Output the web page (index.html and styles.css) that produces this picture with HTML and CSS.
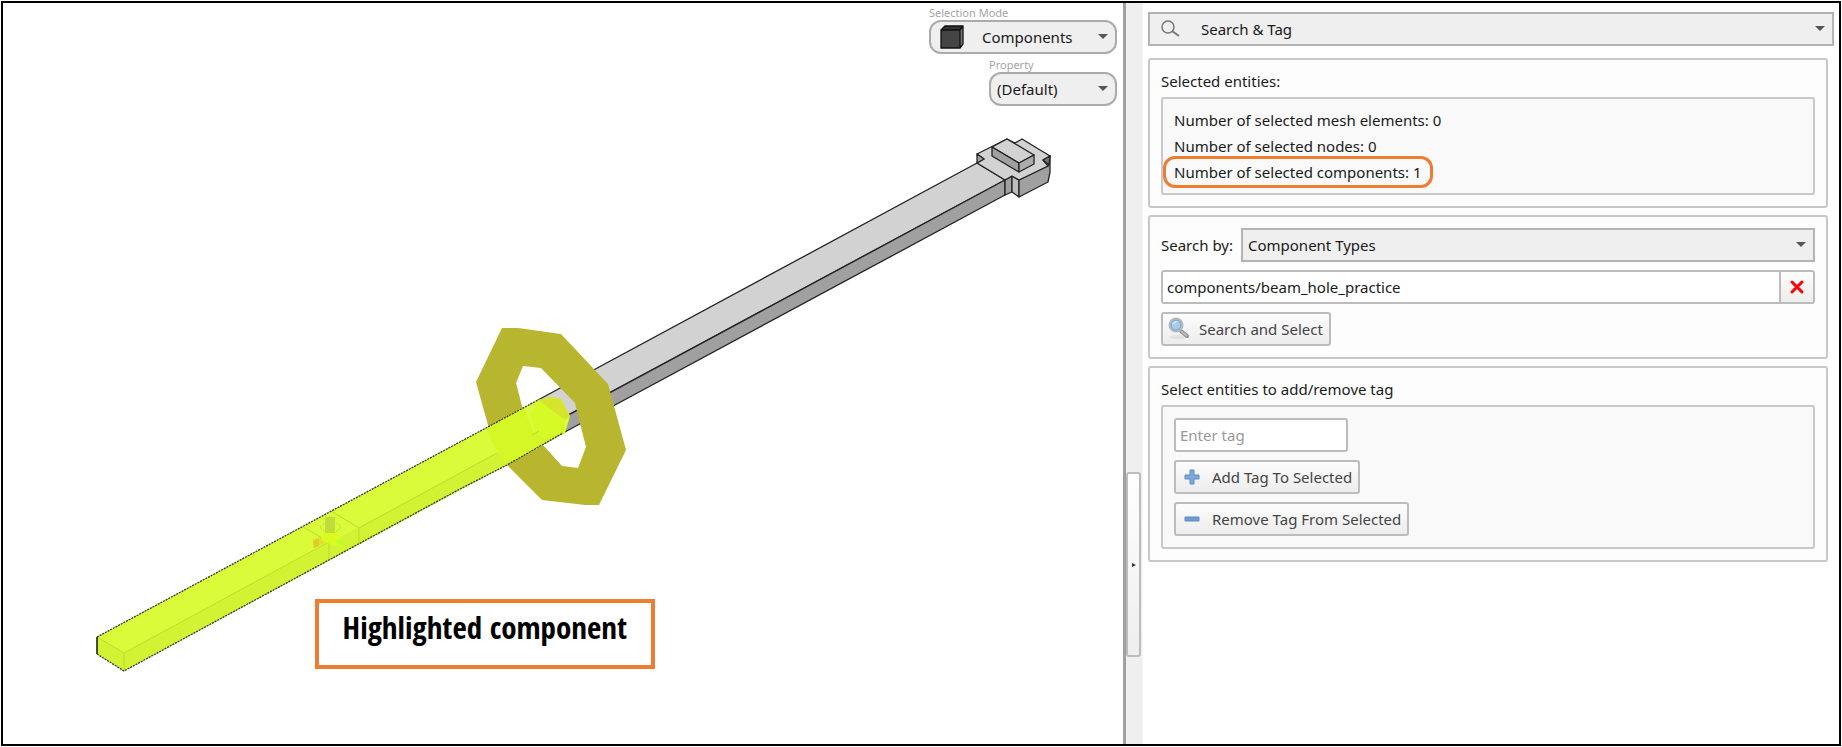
FILE: index.html
```html
<!DOCTYPE html>
<html lang="en">
<head>
    <meta charset="UTF-8">
    <meta name="viewport" content="width=device-width, initial-scale=1.0">
    <title>Search &amp; Tag</title>
    <link rel="stylesheet" href="styles.css">
</head>
<body>
    <div class="window">
        <main class="viewport">
            <svg class="scene" viewBox="3 3 1120 741" preserveAspectRatio="xMinYMin meet" aria-label="Beam model">
                <!-- grey beam -->
                <g stroke="#222" stroke-width="1.3" stroke-linejoin="round">
                    <polygon points="538,400 977,163 1005,180 568,415 550,425" fill="#d2d2d2"/>
                    <polygon points="1005,180 1005,195 563,433 563,418" fill="#a0a0a0"/>
                    <polygon points="1005,180 1012,176 1012,192 1005,195" fill="#a0a0a0"/>
                    <polygon points="1012,176 1019,180 1019,197 1012,192" fill="#bdbdbd"/>
                    <polygon points="1019,180 1048,166 1050,156 1050,172 1048,182 1019,197" fill="#a0a0a0"/>
                    <polygon points="977,154 1007,139 1015,143 1022,139 1050,156 1043,160 1048,166 1019,180 1012,176 1005,180 977,163 984,159" fill="#d2d2d2"/>
                    <polygon points="977,154 984,159 977,163" fill="#a0a0a0"/>
                    <polygon points="1050,156 1043,160 1049,165" fill="#777"/>
                    <polygon points="992,147 1007,139 1034,155 1019,163" fill="#d2d2d2"/>
                    <polygon points="992,147 1019,163 1019,172 992,156" fill="#a0a0a0"/>
                    <polygon points="1034,155 1034,164 1019,172 1019,163" fill="#acacac"/>
                </g>
                <!-- ring -->
                <path fill="#b7b62e" fill-rule="evenodd" d="M502 328H518L561 334L608 384L626 450L599 505H585L542 500L507 465L493 443L476 382ZM523 366L541 368L575 403L586 447L578 468L562 466L543 445L523 410L516 383Z"/>
                <!-- highlighted beam -->
                <polygon points="97,637 538,400 551,397 561,399 570,416 565,433 124,653" fill="#d9fb3a"/>
                <polygon points="124,653 497,453 543,429 565,433 507,465 124,671" fill="#d2f334"/>
                <polygon points="97,637 124,653 124,671 97,654" fill="#d2f334"/>
                <polygon points="486,428 523,407 533,431 543,445 507,465 494,445" fill="#d5f726"/>
                <polygon points="538,400 551,397 561,399 570,416 565,420" fill="#d5e52b"/>
                <polygon points="531,415 538,401 565,420 564,433 543,439 535,431" fill="#d5fa26"/>
                <g fill="none" stroke="#bddb2b" stroke-width="1">
                    <path d="M97 637L124 653V671M124 653L329 542M359 528L497 453M303 527L329 542V560M331 511L359 528V544M532 435L539 431"/>
                    <path d="M320 527L326 522H335L341 527L335 533H326Z" stroke-dasharray="2 1"/>
                </g>
                <g>
                    <rect x="325" y="517" width="10" height="16" fill="#bfdc3a"/>
                    <path d="M313 539L328 536L329 541L314 548Z" fill="#dde02c"/>
                    <path d="M313 541L319 539V546L314 548Z" fill="#dfcb2b"/>
                    <path d="M324 533H337L342 538L336 541L345 547L330 544L321 540Z" fill="#d9fc1f"/>
                    <path d="M336 541L343 539L345 547Z" fill="#bbfa2c"/>
                </g>
                <path d="M97 637L538 400M97 654L124 671L460 489L507 465L563 433" fill="none" stroke="#333" stroke-width="1.3" stroke-dasharray="2 1"/>
                <path d="M97 637V654" stroke="#111" stroke-width="1.5"/>
            </svg>

            <div class="view-controls">
                <label for="selectionMode">Selection Mode</label>
                <div class="dropdown pill pill-wide">
                    <svg class="icon-cube" width="24" height="24" viewBox="0 0 24 24">
                        <path d="M1 5L5 1H23L20 5Z" fill="#333"/>
                        <path d="M20 5L23 1V19L20 23Z" fill="#777"/>
                        <path d="M1 5H20V23H1Z" fill="#444"/>
                        <path d="M1 5H20V23H1ZM1 5L5 1H23V19L20 23M20 5L23 1" fill="none" stroke="#111" stroke-width="1.3"/>
                    </svg>
                    <select id="selectionMode"><option>Components</option></select>
                </div>
                <label for="property">Property</label>
                <div class="dropdown pill">
                    <select id="property"><option>(Default)</option></select>
                </div>
            </div>

            <div class="annotation">Highlighted component</div>
        </main>

        <div class="splitter">
            <button class="handle" aria-label="Collapse panel"></button>
        </div>

        <aside class="panel">
            <div class="dropdown panel-title">
                <svg class="icon-search" width="20" height="18" viewBox="0 0 20 18" fill="none" stroke="#777">
                    <circle cx="7" cy="7" r="6" stroke-width="1.5"/>
                    <path d="M11 11L18 16" stroke-width="2"/>
                </svg>
                <select id="panelName" aria-label="Panel"><option>Search &amp; Tag</option></select>
            </div>

            <section class="group">
                <h2>Selected entities:</h2>
                <div class="inner counts">
                    <p>Number of selected mesh elements: 0</p>
                    <p>Number of selected nodes: 0</p>
                    <p class="marked">Number of selected components: 1</p>
                </div>
            </section>

            <section class="group search">
                <div class="row">
                    <label for="searchBy">Search by:</label>
                    <div class="dropdown">
                        <select id="searchBy"><option>Component Types</option></select>
                    </div>
                </div>
                <div class="field">
                    <input type="text" id="query" aria-label="Search text" value="components/beam_hole_practice">
                    <button class="clear" aria-label="Clear">
                        <svg width="16" height="16" viewBox="0 0 16 16"><path d="M3 3L13 13M13 3L3 13" stroke="#f00" stroke-width="3" stroke-linecap="round"/></svg>
                    </button>
                </div>
                <button class="btn btn-search">
                    <svg width="24" height="24" viewBox="0 0 24 24">
                        <ellipse cx="11" cy="20" rx="9" ry="2" fill="#e2e2e2"/>
                        <path d="M14 14L20 19" stroke="#8c8c8c" stroke-width="4" stroke-linecap="round"/>
                        <path d="M14 14L20 19" stroke="#bbb" stroke-width="2"/>
                        <circle cx="9" cy="8" r="6" fill="#a9cbee" stroke="#b5b9be" stroke-width="3"/>
                        <circle cx="9" cy="8" r="5" fill="none" stroke="#7ba7d8"/>
                        <path d="M5 8Q6 4 11 4Q8 6 5 8Z" fill="#e3f0fc"/>
                    </svg>
                    Search and Select
                </button>
            </section>

            <section class="group">
                <h2>Select entities to add/remove tag</h2>
                <div class="inner tags">
                    <input type="text" id="tag" aria-label="Tag" placeholder="Enter tag">
                    <button class="btn">
                        <svg width="16" height="16" viewBox="0 0 16 16"><path d="M6 1H10V6H15V10H10V15H6V10H1V6H6Z" fill="#7fa9dc" stroke="#5f8cc2"/></svg>
                        Add Tag To Selected
                    </button>
                    <button class="btn">
                        <svg width="16" height="16" viewBox="0 0 16 16"><path d="M1 6H15V10H1Z" fill="#6f9cd2" stroke="#5f8cc2"/></svg>
                        Remove Tag From Selected
                    </button>
                </div>
            </section>
        </aside>
    </div>
</body>
</html>
```

FILE: styles.css
```css
* {
    box-sizing: border-box;
}
body {
    margin: 0;
    padding: 1px;
    background: #fff;
    color: #1a1a1a;
    font-family: "Noto Sans", sans-serif;
    font-size: 15px;
}
.window {
    display: grid;
    grid-template-columns: minmax(0, 1120fr) 20px minmax(0, 696fr);
    min-height: calc(100vh - 2px);
    border: 2px solid #000;
}

/* 3D view */
.viewport {
    position: relative;
}
.scene {
    display: block;
    width: 100%;
}
.view-controls {
    position: absolute;
    top: 3px;
    right: 6px;
    display: flex;
    flex-direction: column;
}
.view-controls label {
    width: 128px;
    align-self: flex-end;
    font-size: 11px;
    line-height: 14px;
    color: #a4a4a4;
}
.view-controls label:first-child {
    width: 188px;
}
.annotation {
    position: absolute;
    left: 28%;
    bottom: 75px;
    margin-left: -2px;
    padding: 6px 24px 20px;
    border: 4px solid #ed7d31;
    background: #fff;
    color: #000;
    font-family: "Open Sans Condensed", "Open Sans", sans-serif;
    font-size: 31px;
    font-weight: bold;
    line-height: 36px;
    white-space: nowrap;
}

/* Controls */
select, input, button {
    height: 34px;
    margin: 0;
    font: inherit;
    color: inherit;
}
select {
    appearance: none;
    width: 100%;
    padding: 0 28px 0 5px;
    border: 2px solid #b4b4b4;
    border-radius: 0;
    background: #efefef;
}
input {
    padding: 0 4px;
    border: 2px solid #bcbcbc;
    border-radius: 3px;
    background: #fff;
}
input::placeholder {
    color: #999;
    opacity: 1;
}
.dropdown {
    position: relative;
    flex: 1;
}
.dropdown::after {
    content: "";
    position: absolute;
    top: 14px;
    right: 9px;
    border: 5px solid transparent;
    border-top-color: #555;
    border-bottom: 0;
}
.pill {
    flex: none;
    width: 128px;
    align-self: flex-end;
    margin-bottom: 4px;
}
.pill-wide {
    width: 188px;
}
.pill select {
    display: block;
    padding-left: 6px;
    border-color: #ababab;
    border-radius: 12px;
}
.pill-wide select {
    padding-left: 51px;
}
.icon-cube, .icon-search {
    position: absolute;
    top: 5px;
    left: 11px;
}
.icon-search {
    top: 8px;
    left: 13px;
}
.btn {
    display: flex;
    align-items: center;
    gap: 12px;
    padding: 0 6px 0 8px;
    border: 2px solid #bcbcbc;
    border-radius: 3px;
    background: linear-gradient(#fdfdfd, #ececec);
    color: #444;
    white-space: nowrap;
}
.btn-search {
    gap: 8px;
    padding-left: 4px;
}

/* Splitter */
.splitter {
    display: flex;
    align-items: flex-start;
    border-left: 3px solid #a0a0a0;
    border-right: 1px solid #f6f6f6;
    background: #efefef;
}
.handle {
    width: 15px;
    height: 185px;
    margin-top: 469px;
    padding: 0;
    border: 2px solid #bcbcbc;
    border-radius: 3px;
    background: linear-gradient(#fff, #eee);
}
.handle::after {
    content: "";
    display: block;
    width: 0;
    margin-left: 4px;
    border: 2px solid transparent;
    border-left: 4px solid #333;
    border-right: 0;
}

/* Side panel */
.panel {
    display: flex;
    flex-direction: column;
    gap: 7px;
    padding: 9px 11px 9px 5px;
}
.panel-title {
    flex: none;
    margin: 0 -6px 5px 0;
}
.panel-title select {
    display: block;
    padding-left: 51px;
}
.group {
    padding: 11px;
    border: 2px solid #c8c8c8;
    border-radius: 3px;
    background: #fdfdfd;
}
h2 {
    margin: 0 0 6px;
    font-size: inherit;
    font-weight: normal;
    line-height: 20px;
}
.inner {
    padding: 11px;
    border: 2px solid #c8c8c8;
    border-radius: 3px;
    background: #f9f9f9;
}
.counts {
    padding: 8px 11px;
}
.counts p {
    width: fit-content;
    margin: 0;
    line-height: 26px;
}
.counts .marked {
    margin: -3px -11px;
    padding: 0 8px;
    border: 3px solid #ed7d31;
    border-radius: 12px;
}
.search, .tags {
    display: flex;
    flex-direction: column;
    align-items: flex-start;
    gap: 8px;
}
.row, .field {
    display: flex;
    align-items: center;
    width: 100%;
}
.row {
    gap: 8px;
}
.field input {
    flex: 1;
    min-width: 0;
    border-radius: 3px 0 0 3px;
}
.clear {
    display: grid;
    place-items: center;
    width: 36px;
    margin-left: -2px;
    padding: 0;
    border: 2px solid #bcbcbc;
    border-radius: 0 3px 3px 0;
    background: linear-gradient(#fdfdfd, #ececec);
}
.tags input {
    width: 174px;
}
```
